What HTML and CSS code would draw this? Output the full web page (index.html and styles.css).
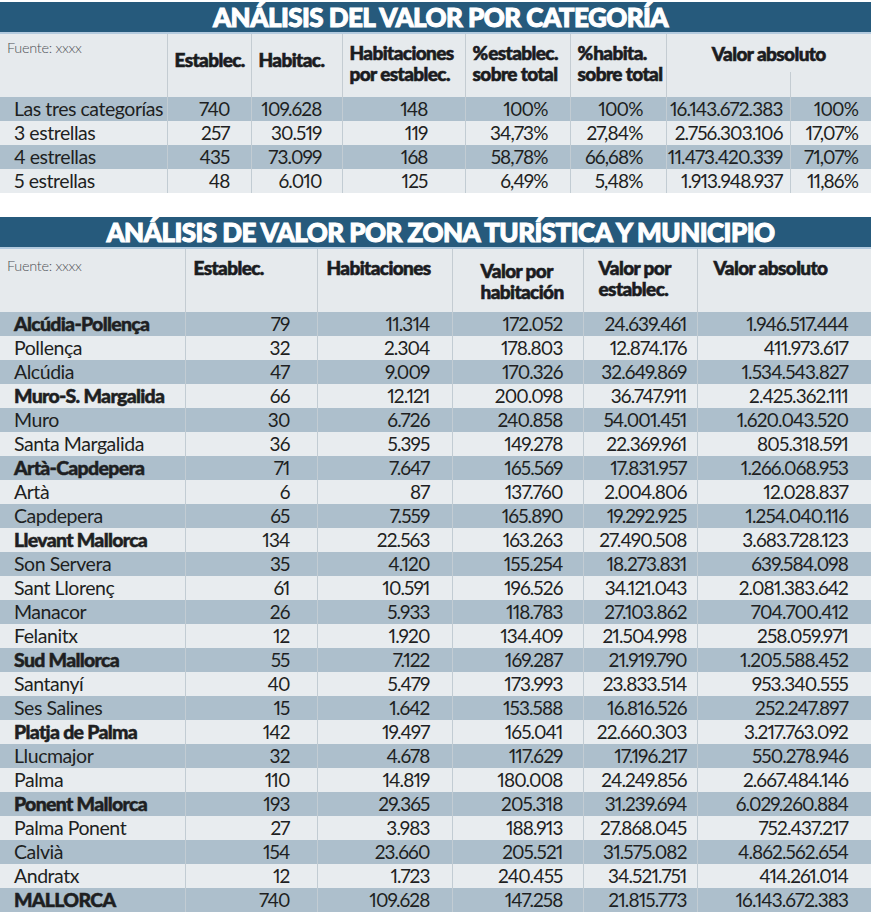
FILE: index.html
```html
<!DOCTYPE html>
<html lang="es">
<head>
<meta charset="utf-8">
<title>Análisis del valor</title>
<link rel="stylesheet" href="styles.css">
</head>
<body>
<div class="page">
  <section class="block">
    <h2 class="title">ANÁLISIS DEL VALOR POR CATEGORÍA</h2>
    <table class="t t1">
      <colgroup>
        <col class="w167"><col class="w84"><col class="w91"><col class="w123"><col class="w105"><col class="w96"><col class="w124"><col class="w81">
      </colgroup>
      <thead>
        <tr class="htop">
          <th rowspan="2" class="src">Fuente: xxxx</th>
          <th rowspan="2" class="one">Establec.</th>
          <th rowspan="2" class="one">Habitac.</th>
          <th rowspan="2" class="two">Habitaciones<br>por establec.</th>
          <th rowspan="2" class="two">%&#8202;establec.<br>sobre total</th>
          <th rowspan="2" class="two">%&#8202;habita.<br>sobre total</th>
          <th colspan="2" class="va">Valor absoluto</th>
        </tr>
        <tr class="hbot"><th class="sub"></th><th class="sub"></th></tr>
      </thead>
      <tbody>
        <tr class="d"><td class="lab">Las tres categorías</td><td>740</td><td>109.628</td><td>148</td><td>100%</td><td>100%</td><td>16.143.672.383</td><td>100%</td></tr>
        <tr class="l"><td class="lab">3 estrellas</td><td>257</td><td>30.519</td><td>119</td><td>34,73%</td><td>27,84%</td><td>2.756.303.106</td><td>17,07%</td></tr>
        <tr class="d"><td class="lab">4 estrellas</td><td>435</td><td>73.099</td><td>168</td><td>58,78%</td><td>66,68%</td><td>11.473.420.339</td><td>71,07%</td></tr>
        <tr class="l"><td class="lab">5 estrellas</td><td>48</td><td>6.010</td><td>125</td><td>6,49%</td><td>5,48%</td><td>1.913.948.937</td><td>11,86%</td></tr>
      </tbody>
    </table>
  </section>

  <section class="block block2">
    <h2 class="title">ANÁLISIS DE VALOR POR ZONA TURÍSTICA Y MUNICIPIO</h2>
    <table class="t t2">
      <colgroup>
        <col class="w185"><col class="w132"><col class="w135"><col class="w131"><col class="w114"><col class="w174">
      </colgroup>
      <thead>
        <tr class="hrow">
          <th class="src">Fuente: xxxx</th>
          <th class="h-est">Establec.</th>
          <th class="h-hab">Habitaciones</th>
          <th class="h-vph">Valor por<br>habitación</th>
          <th class="h-vpe">Valor por<br>establec.</th>
          <th class="h-va">Valor absoluto</th>
        </tr>
      </thead>
      <tbody>
        <tr class="d"><td class="lab b">Alcúdia-Pollença</td><td>79</td><td>11.314</td><td>172.052</td><td>24.639.461</td><td>1.946.517.444</td></tr>
        <tr class="l"><td class="lab">Pollença</td><td>32</td><td>2.304</td><td>178.803</td><td>12.874.176</td><td>411.973.617</td></tr>
        <tr class="d"><td class="lab">Alcúdia</td><td>47</td><td>9.009</td><td>170.326</td><td>32.649.869</td><td>1.534.543.827</td></tr>
        <tr class="l"><td class="lab b">Muro-S. Margalida</td><td>66</td><td>12.121</td><td>200.098</td><td>36.747.911</td><td>2.425.362.111</td></tr>
        <tr class="d"><td class="lab">Muro</td><td>30</td><td>6.726</td><td>240.858</td><td>54.001.451</td><td>1.620.043.520</td></tr>
        <tr class="l"><td class="lab">Santa Margalida</td><td>36</td><td>5.395</td><td>149.278</td><td>22.369.961</td><td>805.318.591</td></tr>
        <tr class="d"><td class="lab b">Artà-Capdepera</td><td>71</td><td>7.647</td><td>165.569</td><td>17.831.957</td><td>1.266.068.953</td></tr>
        <tr class="l"><td class="lab">Artà</td><td>6</td><td>87</td><td>137.760</td><td>2.004.806</td><td>12.028.837</td></tr>
        <tr class="d"><td class="lab">Capdepera</td><td>65</td><td>7.559</td><td>165.890</td><td>19.292.925</td><td>1.254.040.116</td></tr>
        <tr class="l"><td class="lab b">Llevant Mallorca</td><td>134</td><td>22.563</td><td>163.263</td><td>27.490.508</td><td>3.683.728.123</td></tr>
        <tr class="d"><td class="lab">Son Servera</td><td>35</td><td>4.120</td><td>155.254</td><td>18.273.831</td><td>639.584.098</td></tr>
        <tr class="l"><td class="lab">Sant Llorenç</td><td>61</td><td>10.591</td><td>196.526</td><td>34.121.043</td><td>2.081.383.642</td></tr>
        <tr class="d"><td class="lab">Manacor</td><td>26</td><td>5.933</td><td>118.783</td><td>27.103.862</td><td>704.700.412</td></tr>
        <tr class="l"><td class="lab">Felanitx</td><td>12</td><td>1.920</td><td>134.409</td><td>21.504.998</td><td>258.059.971</td></tr>
        <tr class="d"><td class="lab b">Sud Mallorca</td><td>55</td><td>7.122</td><td>169.287</td><td>21.919.790</td><td>1.205.588.452</td></tr>
        <tr class="l"><td class="lab">Santanyí</td><td>40</td><td>5.479</td><td>173.993</td><td>23.833.514</td><td>953.340.555</td></tr>
        <tr class="d"><td class="lab">Ses Salines</td><td>15</td><td>1.642</td><td>153.588</td><td>16.816.526</td><td>252.247.897</td></tr>
        <tr class="l"><td class="lab b">Platja de Palma</td><td>142</td><td>19.497</td><td>165.041</td><td>22.660.303</td><td>3.217.763.092</td></tr>
        <tr class="d"><td class="lab">Llucmajor</td><td>32</td><td>4.678</td><td>117.629</td><td>17.196.217</td><td>550.278.946</td></tr>
        <tr class="l"><td class="lab">Palma</td><td>110</td><td>14.819</td><td>180.008</td><td>24.249.856</td><td>2.667.484.146</td></tr>
        <tr class="d"><td class="lab b">Ponent Mallorca</td><td>193</td><td>29.365</td><td>205.318</td><td>31.239.694</td><td>6.029.260.884</td></tr>
        <tr class="l"><td class="lab">Palma Ponent</td><td>27</td><td>3.983</td><td>188.913</td><td>27.868.045</td><td>752.437.217</td></tr>
        <tr class="d"><td class="lab">Calvià</td><td>154</td><td>23.660</td><td>205.521</td><td>31.575.082</td><td>4.862.562.654</td></tr>
        <tr class="l"><td class="lab">Andratx</td><td>12</td><td>1.723</td><td>240.455</td><td>34.521.751</td><td>414.261.014</td></tr>
        <tr class="d"><td class="lab b">MALLORCA</td><td>740</td><td>109.628</td><td>147.258</td><td>21.815.773</td><td>16.143.672.383</td></tr>
      </tbody>
    </table>
  </section>
</div>
</body>
</html>
```
FILE: styles.css
```css
* { box-sizing: border-box; }
body {
  margin: 0;
  background: #ffffff;
  font-family: Lato, "Noto Sans", sans-serif;
  color: #1e1f22;
}
.page {
  width: 871px;
  padding-top: 2px;
}
.block2 { margin-top: 24px; }

.title {
  margin: 0;
  height: 32px;
  padding-left: 10px;
  background: #265a7c;
  border-bottom: 2px solid #b3cade;
  color: #ffffff;
  font-weight: 900;
  font-size: 26px;
  line-height: 31px;
  letter-spacing: -0.55px;
  -webkit-text-stroke: 1px #ffffff;
  text-align: center;
  white-space: nowrap;
}

.t {
  width: 871px;
  border-collapse: collapse;
  table-layout: fixed;
}
.w167 { width: 167px; } .w84 { width: 84px; } .w91 { width: 91px; } .w123 { width: 123px; }
.w105 { width: 105px; } .w96 { width: 96px; } .w124 { width: 124px; } .w81 { width: 81px; }
.w185 { width: 185px; } .w132 { width: 132px; } .w135 { width: 135px; } .w131 { width: 131px; }
.w114 { width: 114px; } .w174 { width: 174px; }

th {
  background: #e6eaed;
  color: #1b1c1f;
  font-weight: 900;
  font-size: 19px;
  line-height: 21px;
  letter-spacing: -0.6px;
  -webkit-text-stroke: 0.6px #1b1c1f;
  text-align: left;
  vertical-align: top;
  padding: 0 0 0 7px;
  white-space: nowrap;
  border-left: 1px solid #c4ccd2;
}
th.src {
  border-left: none;
  font-weight: 300;
  font-size: 14.5px;
  line-height: 17px;
  letter-spacing: -0.3px;
  -webkit-text-stroke: 0;
  color: #4e5156;
  padding-left: 7px;
}

td {
  height: 24px;
  padding: 0;
  font-size: 19px;
  line-height: 24px;
  letter-spacing: -0.9px;
  font-variant-numeric: proportional-nums;
  font-feature-settings: "pnum" 1;
  text-align: right;
  white-space: nowrap;
  border-left: 1px solid #c2ccd3;
}
td.lab {
  text-align: left;
  padding-left: 14px;
  border-left: none;
  font-size: 19.5px;
  letter-spacing: -0.45px;
}
td.b {
  font-weight: 900;
  letter-spacing: -0.7px;
  -webkit-text-stroke: 0.5px #1e1f22;
}
tr.d td { background: #adbfcc; }
tr.l td { background: #e8ecef; }

/* table 1 header */
.t1 .htop { height: 38px; }
.t1 .hbot { height: 25px; }
.t1 th.src { padding-top: 5px; }
.t1 th.one { padding-top: 15px; }
.t1 th.two { padding-top: 8px; }
.t1 th.va { text-align: center; padding: 9px 0 0 0; }
.t1 th.sub { padding: 0; }

/* table 1 body */
.t1 td:nth-child(2) { padding-right: 21px; }
.t1 td:nth-child(3) { padding-right: 20px; }
.t1 td:nth-child(4) { padding-right: 37px; }
.t1 td:nth-child(5) { padding-right: 22px; }
.t1 td:nth-child(6) { padding-right: 23px; }
.t1 td:nth-child(7) { padding-right: 7px; }
.t1 td:nth-child(8) { padding-right: 13px; }

/* table 2 header */
.t2 .hrow { height: 63px; }
.t2 th.src { padding-top: 6px; }
.t2 th { padding-top: 8px; line-height: 21px; }
.t2 th.h-est { padding-left: 8px; }
.t2 th.h-hab { padding-left: 9px; }
.t2 th.h-vph { padding-left: 28px; padding-top: 11px; }
.t2 th.h-vpe { padding-left: 15px; }
.t2 th.h-va { padding-left: 16px; }

/* table 2 body */
.t2 td:nth-child(2) { padding-right: 27px; }
.t2 td:nth-child(3) { padding-right: 22px; }
.t2 td:nth-child(4) { padding-right: 20px; }
.t2 td:nth-child(5) { padding-right: 10px; }
.t2 td:nth-child(6) { padding-right: 23px; }
```
